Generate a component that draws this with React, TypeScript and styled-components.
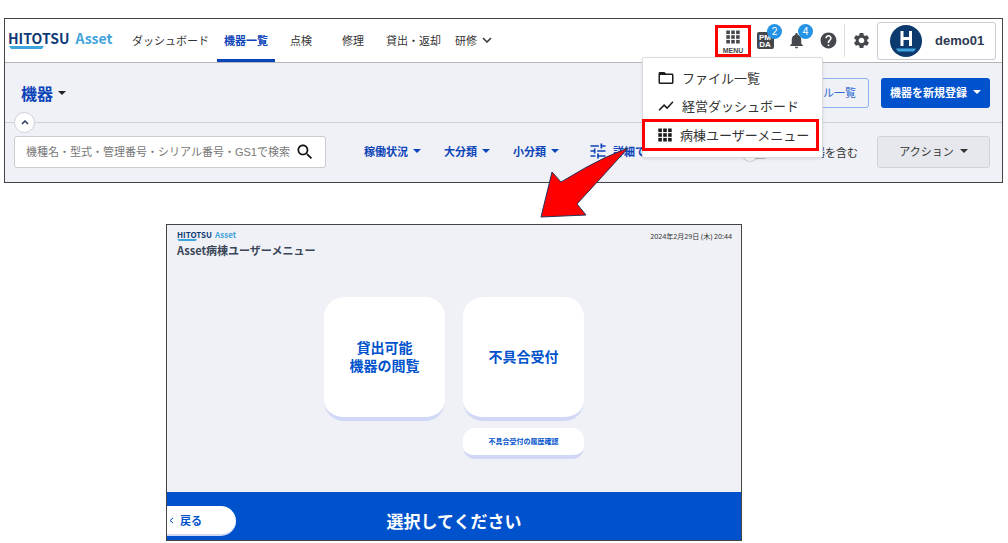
import React from "react";
import styled, { createGlobalStyle, css } from "styled-components";

const sans = `"Noto Sans CJK JP", "Noto Sans", sans-serif`;
const c = {
  blue: "#0052cc",
  navy: "#0f3a75",
  link: "#0b43b8",
  sky: "#3fa3dc",
  bg: "#f0f1f6",
  frame: "#444444",
  text: "#333333",
  icon: "#44474c",
  red: "#ff0000",
};

const GlobalStyle = createGlobalStyle`
  * { box-sizing: border-box; }
  body { margin: 0; background: #fff; font-family: ${sans}; color: ${c.text}; }
  button, input { font-family: inherit; margin: 0; padding: 0; }
  button { border: 0; background: none; color: inherit; cursor: pointer; }
  a { color: inherit; text-decoration: none; }
  h1, h2, p, ul { margin: 0; padding: 0; font-weight: inherit; }
  svg { display: block; flex: none; }
`;

const Page = styled.main`
  position: relative;
  display: flex;
  flex-direction: column;
  gap: 41px;
  padding: 18px 5px 2px 4px;
`;

const AssetWindow = styled.section`
  border: 1px solid ${c.frame};
  background: ${c.bg};
`;

const Header = styled.header`
  display: flex;
  align-items: center;
  height: 44px;
  padding: 0 6px 0 3px;
  background: #fff;
  border-bottom: 1px solid #b4b6ba;
`;

const LogoBox = styled.a<{ $small?: boolean }>`
  display: flex;
  flex-direction: column;
  flex: none;
  width: ${(p) => (p.$small ? 62 : 109)}px;
  padding-bottom: ${(p) => (p.$small ? 0 : 2)}px;
  font-weight: 700;
  font-size: ${(p) => (p.$small ? 8 : 14)}px;
  line-height: ${(p) => (p.$small ? 8 : 16)}px;
  color: ${c.navy};
  white-space: nowrap;
`;
const LogoWords = styled.span<{ $small?: boolean }>`
  display: flex;
  gap: ${(p) => (p.$small ? 3 : 6)}px;
`;
const LogoAsset = styled.span`
  color: ${c.sky};
`;

function Logo({ small }: { small?: boolean }) {
  return (
    <LogoBox href="#" $small={small}>
      <LogoWords $small={small}>
        HITOTSU <LogoAsset>Asset</LogoAsset>
      </LogoWords>
      <svg width={small ? 20 : 36} height={small ? 2 : 3} viewBox="0 0 36 3" preserveAspectRatio="none">
        <path d="M1 0H36L34 3H3Z" fill={c.sky} />
      </svg>
    </LogoBox>
  );
}

const Nav = styled.nav`
  display: flex;
  align-self: stretch;
  margin-left: 8px;
`;
const NavLink = styled.a<{ $active?: boolean; $wide?: boolean }>`
  display: flex;
  align-items: center;
  gap: 5px;
  padding: 0 ${(p) => (p.$wide ? 15 : 7)}px;
  font-size: 11px;
  white-space: nowrap;
  border-bottom: 3px solid transparent;
  border-top: 2px solid transparent;
  ${(p) =>
    p.$active &&
    css`
      margin-left: 1px;
      color: ${c.link};
      font-weight: 700;
      border-bottom-color: ${c.link};
    `}
`;

const Tools = styled.div`
  display: flex;
  align-items: center;
  align-self: stretch;
  margin-left: auto;
  color: ${c.icon};
`;
const MenuAnchor = styled.div`
  position: relative;
  margin-right: 6px;
`;
const MenuButton = styled.button`
  display: flex;
  flex-direction: column;
  align-items: center;
  gap: 2px;
  width: 36px;
  height: 32px;
  padding-top: 2px;
  border: 3px solid ${c.red};
  font: 700 7px/9px "Liberation Sans", sans-serif;
`;
const IconButton = styled.button`
  position: relative;
  display: grid;
  place-items: center;
  width: 32px;
  height: 32px;
  &:first-of-type { width: 16px; margin-right: 7px; }
`;
const Badge = styled.span`
  position: absolute;
  top: -1px;
  right: -9px;
  width: 15px;
  height: 15px;
  border-radius: 50%;
  background: #2493e6;
  color: #fff;
  font: 10px/15px Inter, sans-serif;
  text-align: center;
`;
const BellBadge = styled(Badge)`
  right: -1px;
`;
const Divider = styled.span`
  align-self: stretch;
  width: 1px;
  margin: 5px 0;
  background: #dddddd;
`;
const UserButton = styled.button`
  display: flex;
  align-items: center;
  gap: 13px;
  width: 119px;
  height: 38px;
  padding-left: 12px;
  border: 1px solid #c8ccd2;
  border-radius: 3px;
  font: 700 13px "Liberation Sans", sans-serif;
  color: #2c3a50;
`;

const MenuPanel = styled.ul`
  position: absolute;
  z-index: 2;
  top: 32px;
  left: -73px;
  width: 181px;
  padding: 6px 0 6px;
  list-style: none;
  background: #fff;
  border: 1px solid #dcdcde;
  border-radius: 2px;
  box-shadow: 0 1px 3px rgba(0, 0, 0, 0.1);
`;
const MenuItem = styled.a<{ $marked?: boolean }>`
  display: flex;
  align-items: center;
  gap: 7px;
  height: 28px;
  padding-left: 14px;
  font-size: 13px;
  color: ${c.text};
  white-space: nowrap;
  svg { color: #1c1c1c; }
  ${(p) =>
    p.$marked &&
    css`
      gap: 8px;
      height: 32px;
      margin: -1px 3px 0 -1px;
      padding-left: 13px;
      border: 3px solid ${c.red};
    `}
`;

const TitleRow = styled.div`
  position: relative;
  display: flex;
  align-items: center;
  height: 60px;
  padding: 0 12px 0 16px;
  border-bottom: 1px solid #ccd0da;
`;
const PageTitle = styled.h1`
  display: flex;
  align-items: center;
  gap: 5px;
  margin-right: auto;
  font-size: 16px;
  line-height: 24px;
  font-weight: 700;
  color: ${c.link};
`;
const CollapseButton = styled.button`
  position: absolute;
  left: 9px;
  bottom: -11px;
  display: grid;
  place-items: center;
  width: 21px;
  height: 21px;
  border: 1px solid #ccd0da;
  border-radius: 50%;
  background: #fff;
`;
const Button = styled.button<{ $kind: "outline" | "primary" | "neutral" }>`
  display: flex;
  align-items: center;
  justify-content: center;
  gap: 6px;
  height: 30px;
  padding-bottom: 1px;
  border-radius: 3px;
  font-size: 11px;
  white-space: nowrap;
  ${(p) =>
    p.$kind === "outline" &&
    css`
      padding: 0 12px 1px;
      margin-right: 12px;
      border: 1px solid #8db0ea;
      color: #2f69cf;
    `}
  ${(p) =>
    p.$kind === "primary" &&
    css`
      width: 109px;
      background: ${c.blue};
      color: #fff;
      font-weight: 700;
    `}
  ${(p) =>
    p.$kind === "neutral" &&
    css`
      width: 113px;
      height: 32px;
      border: 1px solid #cfd2d8;
      background: #e6e8ed;
    `}
`;

const FilterRow = styled.div`
  display: flex;
  align-items: center;
  height: 59px;
  padding: 0 12px 2px 9px;
`;
const SearchBox = styled.label`
  display: flex;
  align-items: center;
  width: 312px;
  height: 32px;
  padding: 0 10px 0 11px;
  margin-right: 31px;
  border: 1px solid #cccccc;
  border-radius: 3px;
  background: #fff;
  color: #111;
  input {
    flex: 1;
    min-width: 0;
    border: 0;
    outline: 0;
    background: none;
    font: 11px "Liberation Sans", "Noto Sans CJK JP", sans-serif;
  }
  input::placeholder { color: #777; opacity: 1; }
`;
const FilterButton = styled.button`
  display: flex;
  align-items: center;
  gap: 5px;
  padding: 0 7px 1px;
  margin-right: 9px;
  font-size: 11px;
  font-weight: 700;
  color: ${c.link};
  white-space: nowrap;
`;
const DetailButton = styled(FilterButton)`
  margin-left: 6px;
`;
const ToggleLabel = styled.label`
  display: flex;
  align-items: center;
  gap: 6px;
  margin: 0 19px 0 auto;
  font-size: 11px;
  white-space: nowrap;
`;
const Toggle = styled.input`
  appearance: none;
  display: flex;
  align-items: center;
  width: 26px;
  height: 10px;
  margin: 4px 6px 0 0;
  border-radius: 5px;
  background: #b8babd;
  &::before {
    content: "";
    width: 14px;
    height: 14px;
    border-radius: 50%;
    background: #fafafa;
    box-shadow: 0 0 2px #888;
  }
`;

const WardWindow = styled.section`
  display: flex;
  flex-direction: column;
  width: 58%;
  max-width: 576px;
  margin-left: 162px;
  border: 1px solid ${c.frame};
  background: ${c.bg};
`;
const WardHeader = styled.header`
  display: flex;
  justify-content: space-between;
  padding: 6px 9px 0 10px;
`;
const WardTitle = styled.h2`
  font-size: 11px;
  line-height: 18px;
  font-weight: 700;
  color: #3a4658;
`;
const Clock = styled.time`
  font: 7px/11px "Noto Sans", "Noto Sans CJK JP", sans-serif;
`;
const Cards = styled.div`
  display: flex;
  justify-content: center;
  gap: 18px;
  padding: 38px 0 33px;
`;
const CardColumn = styled.div`
  display: flex;
  flex-direction: column;
  gap: 7px;
`;
const Card = styled.button<{ $small?: boolean }>`
  width: 121px;
  height: ${(p) => (p.$small ? 31 : 124)}px;
  padding-bottom: ${(p) => (p.$small ? 1 : 3)}px;
  border-radius: ${(p) => (p.$small ? 12 : 20)}px;
  border-bottom: 4px solid #d0d8f5;
  background: #fff;
  color: ${c.blue};
  font-weight: 700;
  font-size: ${(p) => (p.$small ? 7 : 14)}px;
  line-height: 18px;
`;
const WardFooter = styled.footer`
  display: grid;
  grid-template-columns: 1fr auto 1fr;
  align-items: center;
  height: 48px;
  padding-top: 10px;
  background: ${c.blue};
  color: #fff;
`;
const BackButton = styled.button`
  display: flex;
  align-items: center;
  gap: 6px;
  width: 69px;
  height: 30px;
  padding-left: 2px;
  border-radius: 0 15px 15px 0;
  border-bottom: 2px solid #d0d8f5;
  background: #fff;
  color: ${c.blue};
  font-size: 11px;
  font-weight: 700;
`;
const FooterText = styled.p`
  font-size: 17px;
  line-height: 24px;
  font-weight: 700;
`;

const ArrowDrawing = styled.svg`
  position: absolute;
  z-index: 3;
  left: 538px;
  top: 145px;
`;

const Caret = ({ color = "currentColor" }: { color?: string }) => (
  <svg width="8" height="4" viewBox="0 0 8 4">
    <path d="M0 0H8L4 4Z" fill={color} />
  </svg>
);
const Grid = () => (
  <svg width="14" height="14" viewBox="0 0 14 14" fill="currentColor">
    {[0.5, 5.2, 9.9].map((y) => [0.3, 5.2, 10.1].map((x) => <rect key={`${x}-${y}`} x={x} y={y} width="3.6" height="3.6" />))}
  </svg>
);
const Material = ({ d, size }: { d: string; size: number }) => (
  <svg width={size} height={size} viewBox="0 0 24 24" fill="currentColor">
    <path d={d} />
  </svg>
);
const paths = {
  bell: "M12 22c1.1 0 2-.9 2-2h-4c0 1.1.89 2 2 2zm6-6v-5c0-3.07-1.64-5.64-4.5-6.32V4c0-.83-.67-1.5-1.5-1.5s-1.5.67-1.5 1.5v.68C7.63 5.36 6 7.92 6 11v5l-2 2v1h16v-1l-2-2z",
  help: "M12 2C6.48 2 2 6.48 2 12s4.48 10 10 10 10-4.48 10-10S17.52 2 12 2zm1 17h-2v-2h2v2zm2.07-7.75l-.9.92C13.45 12.9 13 13.5 13 15h-2v-.5c0-1.1.45-2.1 1.17-2.83l1.24-1.26c.37-.36.59-.86.59-1.41 0-1.1-.9-2-2-2s-2 .9-2 2H8c0-2.21 1.79-4 4-4s4 1.79 4 4c0 .88-.36 1.68-.93 2.25z",
  gear: "M19.14 12.94c.04-.3.06-.61.06-.94 0-.32-.02-.64-.07-.94l2.03-1.58c.18-.14.23-.41.12-.61l-1.92-3.32c-.12-.22-.37-.29-.59-.22l-2.39.96c-.5-.38-1.03-.7-1.62-.94l-.36-2.54c-.04-.24-.24-.41-.48-.41h-3.84c-.24 0-.43.17-.47.41l-.36 2.54c-.59.24-1.13.57-1.62.94l-2.39-.96c-.22-.08-.47 0-.59.22L2.74 8.87c-.12.21-.08.47.12.61l2.03 1.58c-.05.3-.09.63-.09.94s.02.64.07.94l-2.03 1.58c-.18.14-.23.41-.12.61l1.92 3.32c.12.22.37.29.59.22l2.39-.96c.5.38 1.03.7 1.62.94l.36 2.54c.05.24.24.41.48.41h3.84c.24 0 .44-.17.47-.41l.36-2.54c.59-.24 1.13-.56 1.62-.94l2.39.96c.22.08.47 0 .59-.22l1.92-3.32c.12-.22.07-.47-.12-.61l-2.01-1.58zM12 15.6c-1.98 0-3.6-1.62-3.6-3.6s1.62-3.6 3.6-3.6 3.6 1.62 3.6 3.6-1.62 3.6-3.6 3.6z",
  search: "M15.5 14h-.79l-.28-.27C15.41 12.59 16 11.11 16 9.5 16 5.91 13.09 3 9.5 3S3 5.91 3 9.5 5.91 16 9.5 16c1.61 0 3.09-.59 4.23-1.57l.27.28v.79l5 4.99L20.49 19l-4.99-5zm-6 0C7.01 14 5 11.99 5 9.5S7.01 5 9.5 5 14 7.01 14 9.5 11.99 14 9.5 14z",
  folder: "M20 6h-8l-2-2H4c-1.1 0-1.99.9-1.99 2L2 18c0 1.1.9 2 2 2h16c1.1 0 2-.9 2-2V8c0-1.1-.9-2-2-2zm0 12H4V8h16v10z",
  chart: "M3.5 18.49l6-6.01 4 4L22 6.92l-1.41-1.41-7.09 7.97-4-4L2 16.99z",
  tune: "M3 17v2h6v-2H3zM3 5v2h10V5H3zm10 16v-2h8v-2h-8v-2h-2v6h2zM7 9v2H3v2h4v2h2V9H7zm14 4v-2H11v2h10zm-6-4h2V7h4V5h-4V3h-2v6z",
};

const PmdaIcon = () => (
  <svg width="17" height="17" viewBox="0 0 17 17">
    <rect width="17" height="17" rx="2" fill={c.icon} />
    <g fill="#fff" fontFamily="Liberation Sans, sans-serif" fontWeight="700" fontSize="8" textAnchor="middle">
      <text x="8" y="8">PM</text>
      <text x="8" y="15">DA</text>
    </g>
  </svg>
);
const Avatar = () => (
  <svg width="32" height="32" viewBox="0 0 32 32">
    <circle cx="16" cy="16" r="16" fill="#0d3a6e" />
    <path d="M10.500 6h3v6h5.500V6h3v15h-3v-6h-5.500v6h-3z" fill="#fff" />
    <path d="M6 23.500H26L24 26.500H8Z" fill={c.sky} />
  </svg>
);

export default function App() {
  return (
    <>
      <GlobalStyle />
      <Page>
        <AssetWindow>
          <Header>
            <Logo />
            <Nav>
              <NavLink href="#">ダッシュボード</NavLink>
              <NavLink href="#" $active>機器一覧</NavLink>
              <NavLink href="#" $wide>点検</NavLink>
              <NavLink href="#" $wide>修理</NavLink>
              <NavLink href="#">貸出・返却</NavLink>
              <NavLink href="#">
                研修
                <svg width="10" height="6" viewBox="0 0 10 6" fill="none" stroke="currentColor" strokeWidth="1.5">
                  <path d="M1 1L5 5L9 1" />
                </svg>
              </NavLink>
            </Nav>
            <Tools>
              <MenuAnchor>
                <MenuButton aria-expanded="true">
                  <Grid />
                  MENU
                </MenuButton>
                <MenuPanel>
                  <li><MenuItem href="#"><Material d={paths.folder} size={18} />ファイル一覧</MenuItem></li>
                  <li><MenuItem href="#"><Material d={paths.chart} size={18} />経営ダッシュボード</MenuItem></li>
                  <li><MenuItem href="#" $marked><Grid />病棟ユーザーメニュー</MenuItem></li>
                </MenuPanel>
              </MenuAnchor>
              <IconButton aria-label="PMDA"><PmdaIcon /><Badge>2</Badge></IconButton>
              <IconButton aria-label="通知"><Material d={paths.bell} size={19} /><BellBadge>4</BellBadge></IconButton>
              <IconButton aria-label="ヘルプ"><Material d={paths.help} size={19} /></IconButton>
              <Divider />
              <IconButton aria-label="設定"><Material d={paths.gear} size={19} /></IconButton>
              <UserButton><Avatar />demo01</UserButton>
            </Tools>
          </Header>

          <TitleRow>
            <PageTitle>機器 <Caret color="#222" /></PageTitle>
            <Button $kind="outline">ファイル一覧</Button>
            <Button $kind="primary">機器を新規登録 <Caret /></Button>
            <CollapseButton aria-label="折りたたむ">
              <svg width="8" height="5" viewBox="0 0 8 5" fill="none" stroke="#243a5e" strokeWidth="1.5">
                <path d="M1 4L4 1L7 4" />
              </svg>
            </CollapseButton>
          </TitleRow>

          <FilterRow>
            <SearchBox>
              <input aria-label="検索" placeholder="機種名・型式・管理番号・シリアル番号・GS1で検索" />
              <Material d={paths.search} size={20} />
            </SearchBox>
            <FilterButton>稼働状況 <Caret /></FilterButton>
            <FilterButton>大分類 <Caret /></FilterButton>
            <FilterButton>小分類 <Caret /></FilterButton>
            <DetailButton><Material d={paths.tune} size={20} />詳細で</DetailButton>
            <ToggleLabel>
              <Toggle type="checkbox" />
              廃棄機器を含む
            </ToggleLabel>
            <Button $kind="neutral">アクション <Caret /></Button>
          </FilterRow>
        </AssetWindow>

        <WardWindow>
          <WardHeader>
            <div>
              <Logo small />
              <WardTitle>Asset病棟ユーザーメニュー</WardTitle>
            </div>
            <Clock>2024年2月29日 (木) 20:44</Clock>
          </WardHeader>
          <Cards>
            <Card>貸出可能<br />機器の閲覧</Card>
            <CardColumn>
              <Card>不具合受付</Card>
              <Card $small>不具合受付の履歴確認</Card>
            </CardColumn>
          </Cards>
          <WardFooter>
            <BackButton>
              <svg width="5" height="7" viewBox="0 0 5 7" fill="none" stroke="currentColor" strokeWidth="1">
                <path d="M4 1L1 3.500L4 6" />
              </svg>
              戻る
            </BackButton>
            <FooterText>選択してください</FooterText>
          </WardFooter>
        </WardWindow>

        <ArrowDrawing width="94" height="76" viewBox="0 0 94 76" aria-hidden="true">
          <path
            d="M90 3Q66 12 47 23L23 37L14 27L3 72L48 70L39 59Q64 32 90 3Z"
            fill={c.red}
            stroke="#24365c"
            strokeWidth="1"
          />
        </ArrowDrawing>
      </Page>
    </>
  );
}
